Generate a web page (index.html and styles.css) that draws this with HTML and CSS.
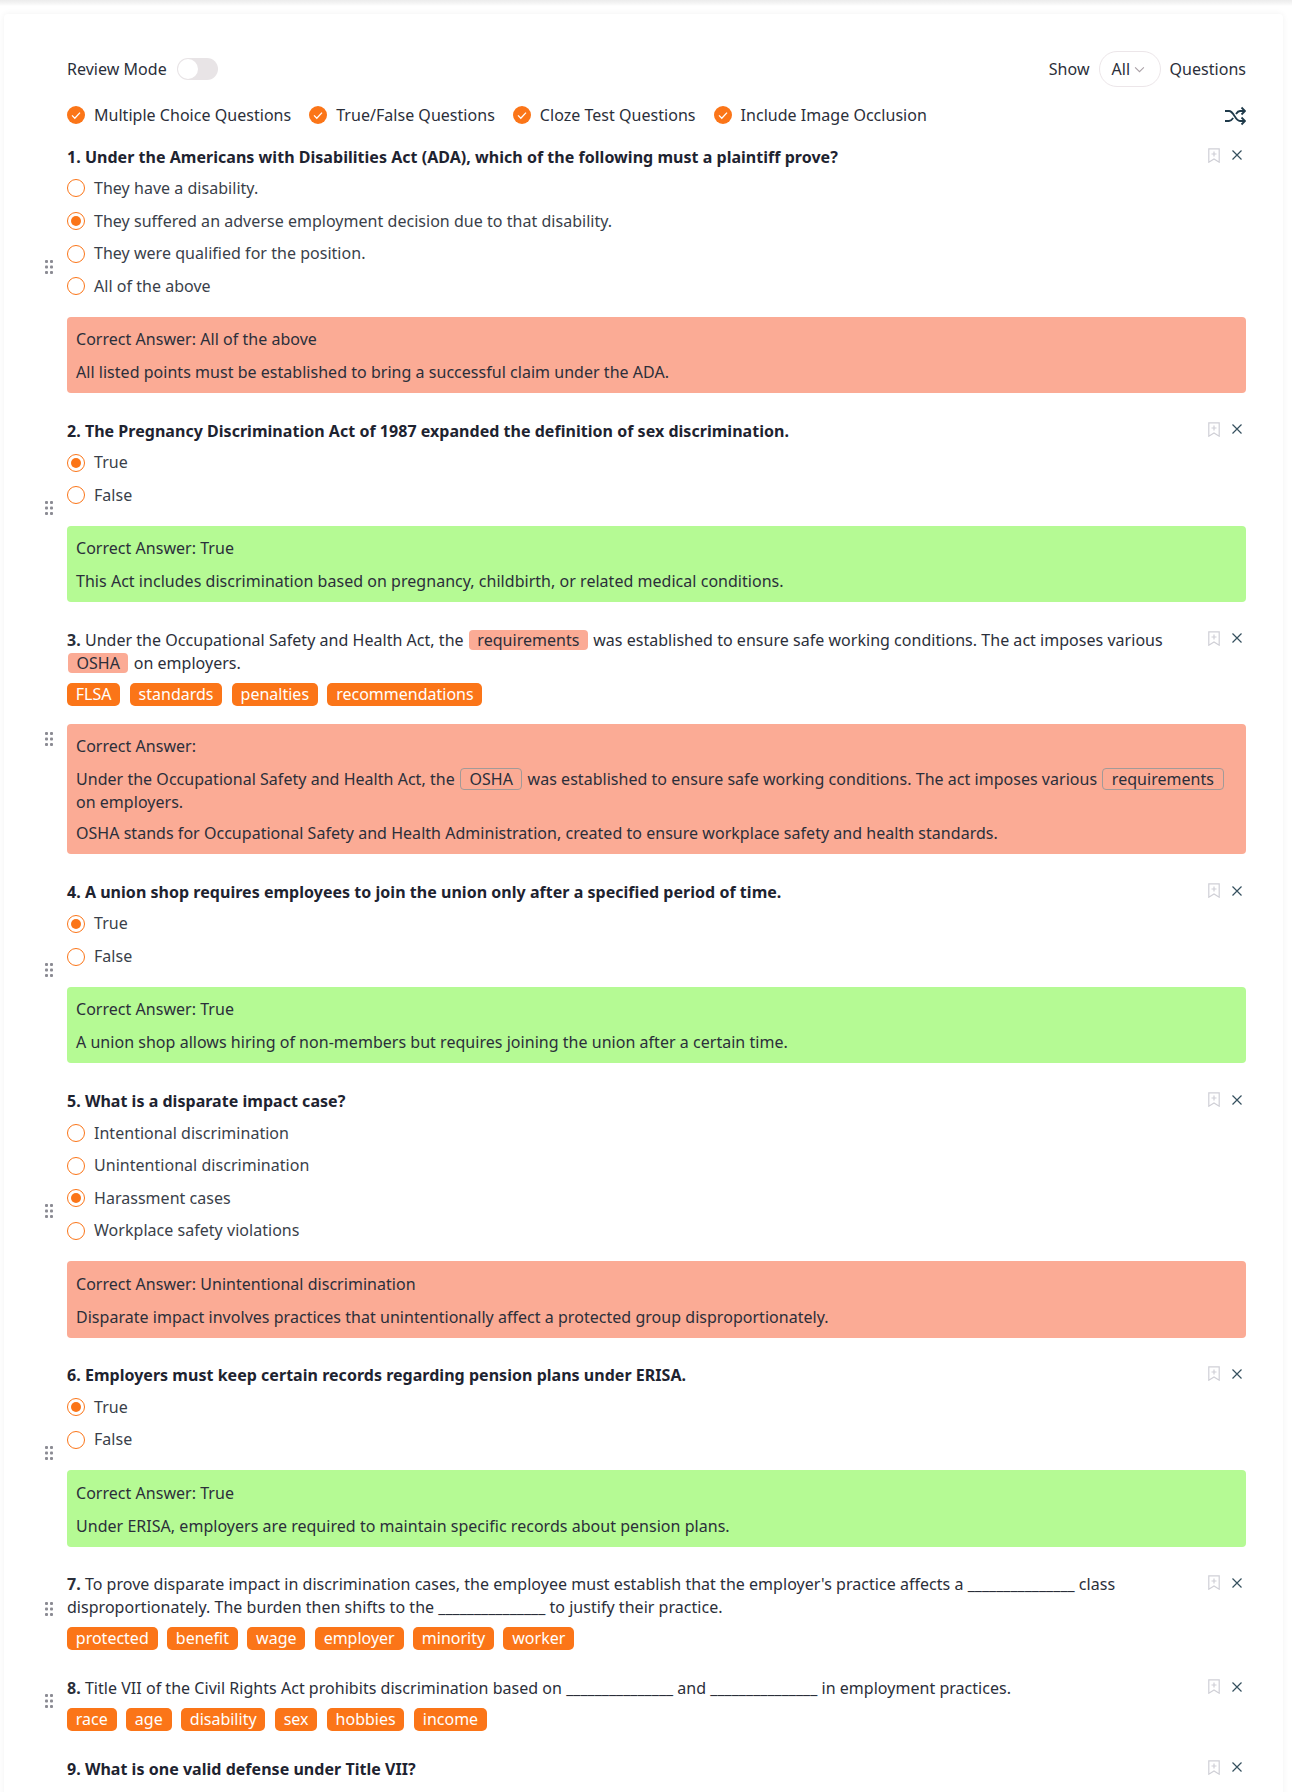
FILE: index.html
```html
<!DOCTYPE html>
<html lang="en">
<head>
<meta charset="utf-8">
<title>Quiz</title>
<link rel="stylesheet" href="styles.css">
</head>
<body>
<svg class="defs" width="0" height="0" aria-hidden="true">
  <symbol id="grip" viewBox="0 0 10 16"><g fill="#8b8b93"><rect x="1" y="1" width="3" height="3" rx="1"/><rect x="6" y="1" width="3" height="3" rx="1"/><rect x="1" y="6.500" width="3" height="3" rx="1"/><rect x="6" y="6.500" width="3" height="3" rx="1"/><rect x="1" y="12" width="3" height="3" rx="1"/><rect x="6" y="12" width="3" height="3" rx="1"/></g></symbol>
  <symbol id="mark" viewBox="0 0 12 15"><path d="M.8.8h10.400v13.400L6 11 .8 14.200zM6 3.500v5M3.500 6h5" fill="none" stroke="#cfcfd6" stroke-width="1.200"/></symbol>
  <symbol id="close" viewBox="0 0 10 10"><path d="M.5.500l9 9M9.500.500l-9 9" fill="none" stroke="#35505e" stroke-width="1.200"/></symbol>
  <symbol id="tick" viewBox="0 0 18 18"><circle cx="9" cy="9" r="9" fill="#fb7518"/><path d="M5 9.400l2.800 2.800L13 6.600" fill="none" stroke="#fff" stroke-width="1.300"/></symbol>
</svg>
<div class="topbar"></div>
<main class="card">
  <div class="head">
    <div class="mode"><span>Review Mode</span><span class="switch"><span class="knob"></span></span></div>
    <div class="show"><span>Show</span><span class="select">All<svg class="chev" viewBox="0 0 12 8"><path d="M1 1.500l5 5 5-5" fill="none" stroke="#a9a0a6" stroke-width="1.200"/></svg></span><span>Questions</span></div>
  </div>
  <div class="filters">
    <span class="filter"><svg class="tick"><use href="#tick"/></svg>Multiple Choice Questions</span>
    <span class="filter"><svg class="tick"><use href="#tick"/></svg>True/False Questions</span>
    <span class="filter"><svg class="tick"><use href="#tick"/></svg>Cloze Test Questions</span>
    <span class="filter"><svg class="tick"><use href="#tick"/></svg>Include Image Occlusion</span>
    <svg class="shuffle" viewBox="0 0 22 20"><path d="M1 5h4c5 0 6 10 11 10h4M1 15h4c1.800 0 3-1.300 4.200-3M12 8c1-1.600 2.300-3 4-3h4M17.500 1.500L21 5l-3.500 3.500M17.500 11.500L21 15l-3.500 3.500" fill="none" stroke="#1f3a4a" stroke-width="1.800"/></svg>
  </div>

  <section class="q">
    <svg class="grip"><use href="#grip"/></svg>
    <div class="tools"><svg class="mark"><use href="#mark"/></svg><svg class="close"><use href="#close"/></svg></div>
    <h3 class="title">1. Under the Americans with Disabilities Act (ADA), which of the following must a plaintiff prove?</h3>
    <div class="opt"><span class="radio"></span>They have a disability.</div>
    <div class="opt"><span class="radio on"></span>They suffered an adverse employment decision due to that disability.</div>
    <div class="opt"><span class="radio"></span>They were qualified for the position.</div>
    <div class="opt"><span class="radio"></span>All of the above</div>
    <div class="ans bad"><p>Correct Answer: All of the above</p><p>All listed points must be established to bring a successful claim under the ADA.</p></div>
  </section>

  <section class="q">
    <svg class="grip"><use href="#grip"/></svg>
    <div class="tools"><svg class="mark"><use href="#mark"/></svg><svg class="close"><use href="#close"/></svg></div>
    <h3 class="title">2. The Pregnancy Discrimination Act of 1987 expanded the definition of sex discrimination.</h3>
    <div class="opt"><span class="radio on"></span>True</div>
    <div class="opt"><span class="radio"></span>False</div>
    <div class="ans good"><p>Correct Answer: True</p><p>This Act includes discrimination based on pregnancy, childbirth, or related medical conditions.</p></div>
  </section>

  <section class="q q-3">
    <svg class="grip"><use href="#grip"/></svg>
    <div class="tools"><svg class="mark"><use href="#mark"/></svg><svg class="close"><use href="#close"/></svg></div>
    <div class="cloze"><b>3.</b> Under the Occupational Safety and Health Act, the <span class="blank">requirements</span> was established to ensure safe working conditions. The act imposes various <span class="blank">OSHA</span> on employers.</div>
    <div class="tags"><span class="tag">FLSA</span><span class="tag">standards</span><span class="tag">penalties</span><span class="tag">recommendations</span></div>
    <div class="ans bad"><p>Correct Answer:</p><p class="wrap">Under the Occupational Safety and Health Act, the <span class="slot">OSHA</span> was established to ensure safe working conditions. The act imposes various <span class="slot">requirements</span><br>on employers.</p><p>OSHA stands for Occupational Safety and Health Administration, created to ensure workplace safety and health standards.</p></div>
  </section>

  <section class="q">
    <svg class="grip"><use href="#grip"/></svg>
    <div class="tools"><svg class="mark"><use href="#mark"/></svg><svg class="close"><use href="#close"/></svg></div>
    <h3 class="title">4. A union shop requires employees to join the union only after a specified period of time.</h3>
    <div class="opt"><span class="radio on"></span>True</div>
    <div class="opt"><span class="radio"></span>False</div>
    <div class="ans good"><p>Correct Answer: True</p><p>A union shop allows hiring of non-members but requires joining the union after a certain time.</p></div>
  </section>

  <section class="q">
    <svg class="grip"><use href="#grip"/></svg>
    <div class="tools"><svg class="mark"><use href="#mark"/></svg><svg class="close"><use href="#close"/></svg></div>
    <h3 class="title">5. What is a disparate impact case?</h3>
    <div class="opt"><span class="radio"></span>Intentional discrimination</div>
    <div class="opt"><span class="radio"></span>Unintentional discrimination</div>
    <div class="opt"><span class="radio on"></span>Harassment cases</div>
    <div class="opt"><span class="radio"></span>Workplace safety violations</div>
    <div class="ans bad"><p>Correct Answer: Unintentional discrimination</p><p>Disparate impact involves practices that unintentionally affect a protected group disproportionately.</p></div>
  </section>

  <section class="q">
    <svg class="grip"><use href="#grip"/></svg>
    <div class="tools"><svg class="mark"><use href="#mark"/></svg><svg class="close"><use href="#close"/></svg></div>
    <h3 class="title">6. Employers must keep certain records regarding pension plans under ERISA.</h3>
    <div class="opt"><span class="radio on"></span>True</div>
    <div class="opt"><span class="radio"></span>False</div>
    <div class="ans good"><p>Correct Answer: True</p><p>Under ERISA, employers are required to maintain specific records about pension plans.</p></div>
  </section>

  <section class="q">
    <svg class="grip"><use href="#grip"/></svg>
    <div class="tools"><svg class="mark"><use href="#mark"/></svg><svg class="close"><use href="#close"/></svg></div>
    <div class="cloze"><b>7.</b> To prove disparate impact in discrimination cases, the employee must establish that the employer's practice affects a _______________ class disproportionately. The burden then shifts to the _______________ to justify their practice.</div>
    <div class="tags"><span class="tag">protected</span><span class="tag">benefit</span><span class="tag">wage</span><span class="tag">employer</span><span class="tag">minority</span><span class="tag">worker</span></div>
  </section>

  <section class="q">
    <svg class="grip"><use href="#grip"/></svg>
    <div class="tools"><svg class="mark"><use href="#mark"/></svg><svg class="close"><use href="#close"/></svg></div>
    <div class="cloze"><b>8.</b> Title VII of the Civil Rights Act prohibits discrimination based on _______________ and _______________ in employment practices.</div>
    <div class="tags"><span class="tag">race</span><span class="tag">age</span><span class="tag">disability</span><span class="tag">sex</span><span class="tag">hobbies</span><span class="tag">income</span></div>
  </section>

  <section class="q">
    <div class="tools"><svg class="mark"><use href="#mark"/></svg><svg class="close"><use href="#close"/></svg></div>
    <h3 class="title">9. What is one valid defense under Title VII?</h3>
  </section>
</main>
</body>
</html>
```

FILE: styles.css
```css
* { box-sizing: border-box; }
html, body { margin: 0; height: 1792px; overflow: hidden; background: #fff; }
body { font-family: "Noto Sans", "Open Sans", sans-serif; font-size: 16px; line-height: 23px; color: #2b2f3a; letter-spacing: 0.03px; }
.defs { position: absolute; }
.topbar { height: 14px; background: linear-gradient(#ececec 0, #f7f7f7 4px, #fff 6px, #fff 100%); }
.card { margin: 0 9px 0 4px; padding: 37px 37px 0 63px; box-shadow: 0 0 6px rgba(0,0,0,.06); border-radius: 4px; min-height: 1778px; }
.head { display: flex; justify-content: space-between; align-items: center; height: 36px; }
.mode, .show { display: flex; align-items: center; gap: 9px; }
.mode { gap: 10px; }
.switch { width: 41px; height: 22px; border-radius: 11px; background: #e8e4e6; padding: 1px; display: block; }
.knob { display: block; width: 20px; height: 20px; border-radius: 50%; background: #fff; }
.select { width: 62px; height: 36px; border: 1px solid #ece6e9; border-radius: 18px; display: flex; align-items: center; padding-left: 12px; gap: 4px; }
.chev { width: 11px; height: 7px; }
.filters { display: flex; align-items: center; gap: 18px; margin-top: 10px; margin-bottom: 6.5px; height: 36px; position: relative; }
.filter { display: flex; align-items: center; gap: 9px; }
.tick { width: 18px; height: 18px; flex: none; }
.shuffle { position: absolute; right: 0; top: 9px; width: 22px; height: 20px; }
.q { position: relative; padding-top: 5px; padding-bottom: 20.7px; }
.grip { position: absolute; left: -23px; top: 50%; width: 10px; height: 16px; margin-top: -18px; }
.tools { position: absolute; right: 0; top: 8px; display: flex; align-items: center; gap: 12px; }
.mark { width: 12px; height: 15px; }
.close { width: 10px; height: 10px; margin-right: 4px; }
.title { margin: 0 0 3.700px; font-size: 16px; line-height: 23px; font-weight: 700; height: 24px; padding-top: 1px; color: #1e2330; }
.cloze { padding-right: 68px; padding-top: 1px; }
.cloze b { font-weight: 700; }
.blank { display: inline-block; height: 20px; line-height: 20px; padding: 0 8.5px; border-radius: 4px; background: #fbab95; margin: 0 1px; }
.opt { display: flex; align-items: center; gap: 9px; height: 32.6px; color: #3a3f4a; }
.radio { width: 18px; height: 18px; border-radius: 50%; border: 1px solid #fb7518; background: #fff; flex: none; position: relative; }
.radio.on::after { content: ""; position: absolute; left: 3px; top: 3px; width: 10px; height: 10px; border-radius: 50%; background: #fb7518; }
.ans { border-radius: 4px; margin-top: 14px; padding: 11.5px 9px 9px; }
.ans p { margin: 0; line-height: 23px; }
.ans p + p { margin-top: 10px; }
.ans .wrap + p { margin-top: 8px; }
.good { background: #b5fa94; }
.bad { background: #fbab95; }
.slot { display: inline-block; height: 22px; line-height: 20px; padding: 0 8.5px; border: 1px solid #a29a98; border-radius: 4px; margin: 0 1px; }
.tags { display: flex; gap: 9.5px; margin-top: 8px; }
.tag { height: 23px; line-height: 22px; padding: 0 8.8px; border-radius: 5px; background: #fb7518; color: #fff; letter-spacing: 0; }
.q-3 .ans { margin-top: 18px; }
```
